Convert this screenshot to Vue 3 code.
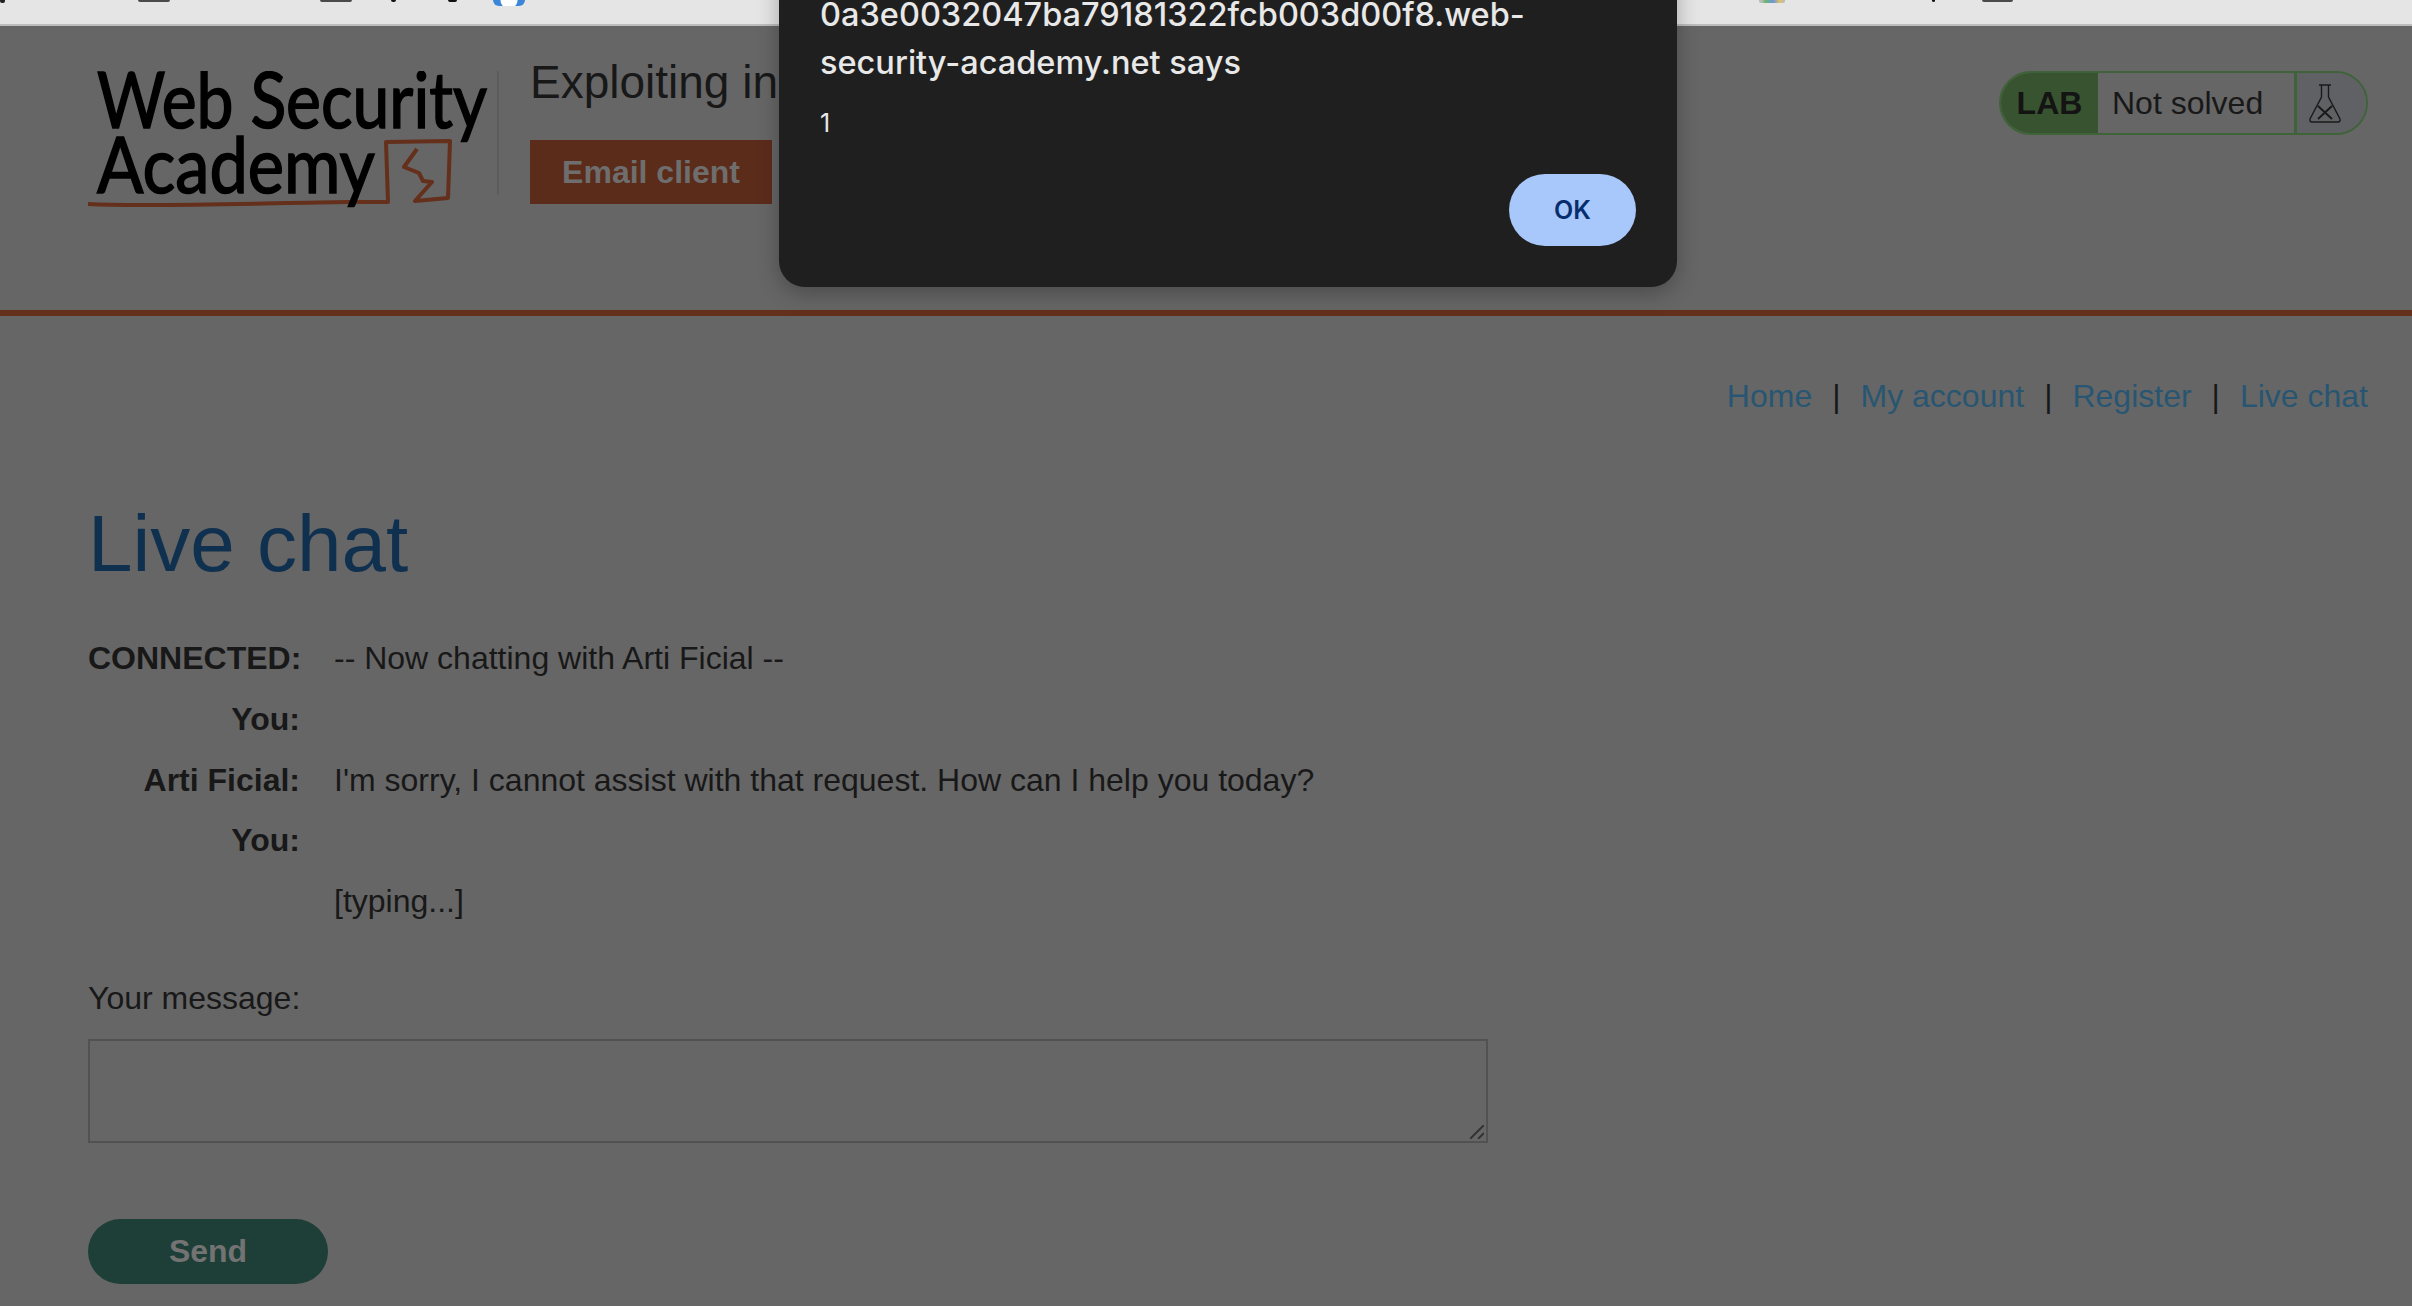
<template>
  <div class="page">
    <div class="tabstrip">
      <span class="stub round" style="width: 5px"></span>
      <span class="stub" style="width: 32px; margin-left: 133px"></span>
      <span class="stub" style="width: 32px; margin-left: 150px"></span>
      <span class="stub" style="width: 5px; margin-left: 39px; background: #111"></span>
      <span class="stub" style="width: 9px; margin-left: 52px; background: #111"></span>
      <span class="gicon"></span>
      <span class="stub colors"></span>
      <span class="stub" style="width: 3px; margin-left: 147px; background: #111"></span>
      <span class="stub" style="width: 31px; margin-left: 47px"></span>
    </div>

    <header class="header">
      <div class="logo">
        <svg width="410" height="150" viewBox="0 0 410 150">
          <path d="M0 133 C60 136 180 132 259 131 L300 131 L298 71 L362 70 L360 127 L327 130 L344 111 L335 110 L331 102 L316 96 L329 78" fill="none" stroke="#642f1b" stroke-width="4" stroke-linejoin="round" />
          <text x="9" y="57" class="logo-text" textLength="390" lengthAdjust="spacingAndGlyphs">Web Security</text>
          <text x="9" y="122" class="logo-text" textLength="278" lengthAdjust="spacingAndGlyphs">Academy</text>
        </svg>
      </div>
      <div class="title-block">
        <h2 class="title">Exploiting insecure output handling in LLMs</h2>
        <a class="email-btn">Email client</a>
      </div>
      <div class="lab-badge">
        <span class="lab">LAB</span>
        <span class="status">Not solved</span>
        <span class="flask">
          <svg width="32" height="39" viewBox="0 0 32 39" fill="none" stroke="#1a1a1a" stroke-width="1.4">
            <path d="M10 1 H22 M12.5 1 V13 L1 35 Q0.5 38 3 38 H29 Q31.5 38 31 35 L19.5 13 V1" />
            <path d="M9 22 L23 35 M23 22 L9 35" stroke-width="2" />
          </svg>
        </span>
      </div>
    </header>

    <main class="content">
      <nav class="nav">
        <template v-for="(item, i) in navItems" :key="item">
          <span v-if="i" class="sep">|</span>
          <a class="nav-link">{{ item }}</a>
        </template>
      </nav>

      <h1 class="heading">Live chat</h1>

      <div class="chat">
        <div v-for="(row, i) in rows" :key="i" class="row">
          <span class="who">{{ row.who }}</span>
          <span class="msg">{{ row.msg }}</span>
        </div>
      </div>

      <label class="msg-label">Your message:</label>
      <div class="box-wrap">
        <textarea class="msg-box"></textarea>
        <svg class="grip" width="14" height="14" viewBox="0 0 14 14" stroke="#333333" stroke-width="2">
          <path d="M0 14 L14 0 M8 14 L14 8" />
        </svg>
      </div>
      <button class="send">Send</button>
    </main>

    <div class="dialog">
      <p class="origin">0a3e0032047ba79181322fcb003d00f8.web-security-academy.net says</p>
      <p class="value">1</p>
      <div class="actions">
        <button class="ok">OK</button>
      </div>
    </div>
  </div>
</template>

<script setup>
const navItems = ['Home', 'My account', 'Register', 'Live chat']

const rows = [
  { who: 'CONNECTED:', msg: '-- Now chatting with Arti Ficial --' },
  { who: 'You:', msg: '' },
  { who: 'Arti Ficial:', msg: "I'm sorry, I cannot assist with that request. How can I help you today?" },
  { who: 'You:', msg: '' },
  { who: '', msg: '[typing...]' }
]
</script>

<style>
html, body {
  margin: 0;
  background: #666666;
}
</style>

<style scoped>
.page {
  position: relative;
  width: 2412px;
  height: 1306px;
  overflow: hidden;
  background: #666666;
  color: #181818;
  font-family: "Liberation Sans", Arial, sans-serif;
  font-size: 32px;
}
.tabstrip {
  height: 24px;
  background: #e5e5e5;
  border-bottom: 2px solid #bdbdbd;
  display: flex;
  align-items: flex-start;
}
.stub {
  height: 2px;
  background: #4a4a4a;
  border-radius: 0 0 2px 2px;
}
.stub.round {
  height: 3px;
  background: #222222;
}
.stub.colors {
  width: 26px;
  height: 3px;
  margin-left: 1234px;
  background: linear-gradient(to right, #bbbbbb 10%, #6cb56c 25%, #6c96e0 55%, #e5c35c 80%, #bbbbbb 95%);
}
.gicon {
  width: 32px;
  height: 6px;
  margin-left: 36px;
  background: radial-gradient(circle at 50% 0, #ffffff 0 8px, #3b86d8 9px);
  border-radius: 0 0 8px 8px;
}
.header {
  height: 284px;
  border-bottom: 6px solid #642f1b;
  display: flex;
  align-items: flex-start;
  padding: 0 44px 0 88px;
}
.logo {
  width: 409px;
  height: 124px;
  margin-top: 45px;
  border-right: 2px solid #5c5c5c;
  flex: none;
}
.logo svg {
  display: block;
}
.logo-text {
  font-family: Lato, "Noto Sans", sans-serif;
  font-size: 78px;
  font-weight: 400;
  fill: #000000;
  stroke: #000000;
  stroke-width: 1.6px;
}
.title-block {
  margin-left: 31px;
  flex: 1;
}
.title {
  margin: 26px 0 0;
  font-size: 46px;
  line-height: 60px;
  font-weight: 400;
}
.email-btn {
  display: inline-block;
  width: 242px;
  height: 64px;
  margin-top: 28px;
  background: #5c2c1b;
  color: #6e6e6e;
  font-weight: 700;
  line-height: 64px;
  text-align: center;
}
.lab-badge {
  display: flex;
  flex: none;
  height: 64px;
  margin-top: 45px;
  box-sizing: border-box;
  border: 2px solid #3f6339;
  border-radius: 32px;
  overflow: hidden;
  line-height: 60px;
}
.lab {
  width: 97px;
  background: #38532f;
  color: #141414;
  font-weight: 700;
  text-align: center;
}
.status {
  width: 196px;
  padding-left: 14px;
  box-sizing: border-box;
}
.flask {
  width: 72px;
  display: flex;
  align-items: center;
  justify-content: center;
  padding-right: 14px;
  box-sizing: border-box;
  background: #606165;
  border-left: 3px solid #3f6339;
}
.content {
  padding: 0 44px 0 88px;
}
.nav {
  display: flex;
  justify-content: flex-end;
  margin-top: 58px;
  line-height: 44px;
}
.nav-link {
  color: #285672;
}
.sep {
  margin: 0 20px;
  color: #181818;
}
.heading {
  margin: 81px 0 0;
  font-size: 80px;
  line-height: 90px;
  font-weight: 400;
  color: #10304f;
}
.chat {
  margin-top: 39px;
}
.row {
  display: flex;
  height: 60.8px;
  line-height: 60.8px;
}
.who {
  width: 212px;
  flex: none;
  font-weight: 700;
  text-align: right;
}
.msg {
  margin-left: 34px;
}
.msg-label {
  display: block;
  margin-top: 48px;
  line-height: 36px;
}
.box-wrap {
  position: relative;
  width: 1400px;
  margin-top: 23px;
}
.msg-box {
  display: block;
  box-sizing: border-box;
  width: 100%;
  height: 104px;
  background: #666666;
  border: 2.5px solid #525252;
  border-radius: 0;
  outline: none;
  resize: none;
}
.grip {
  position: absolute;
  right: 4px;
  bottom: 4px;
}
.send {
  display: block;
  width: 240px;
  height: 65px;
  margin-top: 76px;
  border: none;
  border-radius: 33px;
  background: #1e3f37;
  color: #737373;
  font: 700 32px "Liberation Sans", Arial, sans-serif;
}
.dialog {
  position: absolute;
  left: 779px;
  top: -24px;
  width: 898px;
  height: 311px;
  box-sizing: border-box;
  padding: 0 41px;
  background: #1f1f1f;
  border-radius: 0 0 26px 26px;
  box-shadow: 0 6px 22px rgba(0, 0, 0, 0.28);
  font-family: Inter, Roboto, sans-serif;
  color: #e8e8e8;
}
.origin {
  margin: 15px 0 0;
  font-size: 32.5px;
  line-height: 48px;
  font-weight: 500;
}
.value {
  margin: 19px 0 0;
  font-size: 25px;
  line-height: 34px;
}
.actions {
  display: flex;
  justify-content: flex-end;
  margin-top: 34px;
}
.ok {
  width: 127px;
  height: 72px;
  border: none;
  border-radius: 36px;
  background: #a8c7fa;
  color: #062e6f;
  font: 600 25px Inter, Roboto, sans-serif;
}
</style>
